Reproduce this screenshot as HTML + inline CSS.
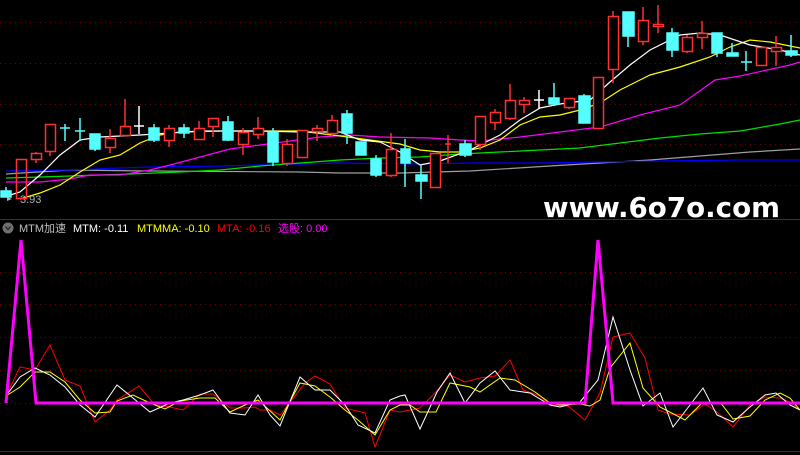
<!DOCTYPE html>
<html><head><meta charset="utf-8"><style>
html,body{margin:0;padding:0;background:#000;width:800px;height:455px;overflow:hidden}
svg{display:block}
text{font-family:"Liberation Sans","Noto Sans CJK SC",sans-serif}
</style></head><body>
<svg width="800" height="455" xmlns="http://www.w3.org/2000/svg">
<g stroke="#7a0000" stroke-dasharray="1,4" stroke-width="1">
<line x1="0" y1="22.5" x2="800" y2="22.5"/><line x1="0" y1="63.5" x2="800" y2="63.5"/><line x1="0" y1="104.5" x2="800" y2="104.5"/><line x1="0" y1="144.5" x2="800" y2="144.5"/><line x1="0" y1="185.5" x2="800" y2="185.5"/>
<line x1="0" y1="272.5" x2="800" y2="272.5"/><line x1="0" y1="304.5" x2="800" y2="304.5"/><line x1="0" y1="337.5" x2="800" y2="337.5"/><line x1="0" y1="370.5" x2="800" y2="370.5"/><line x1="0" y1="403.5" x2="800" y2="403.5"/>
</g>
<line x1="0" y1="219.5" x2="800" y2="219.5" stroke="#b00000"/>
<line x1="0" y1="451.5" x2="800" y2="451.5" stroke="#b00000"/>
<g fill="none" stroke-width="1.2">
<polyline stroke="#9e9e9e" points="6,174 70,170 150,171 300,172 340,173 400,173 470,171 550,166 600,163 650,160 700,156 750,152 800,149"/>
<polyline stroke="#0000ff" points="6,171 70,170 120,168 150,167 220,166 300,164 340,163 420,164 470,163 540,163 600,162 660,161 740,160 800,160"/>
<polyline stroke="#00e000" points="6,178 40,177 70,176 100,175 130,174 180,172 220,170 260,166 300,163 340,160 380,158 420,157 460,154 500,152 540,150 580,148 620,143 660,138 700,134 740,131 780,124 800,120"/>
<polyline stroke="#ff00ff" points="6,182 40,182 70,179 90,175 120,175 150,170 170,165 200,157 230,149 260,145 290,141 320,137 350,135 380,137 430,138 460,140 480,141 520,137 560,132 600,127 640,115 680,105 715,80 740,76 790,65 800,62"/>
</g>
<g fill="none" stroke-width="1.2">
<polyline stroke="#ffff00" points="20,199 40,193 60,185 80,172 100,160 120,155 140,143 160,135 180,132 220,131 260,131 300,131 340,136 370,140 400,144 420,150 440,152 460,152 480,148 500,140 520,125 540,117 560,115 580,110 600,103 620,90 650,75 680,67 710,57 730,47 750,40 770,42 800,48"/>
<polyline stroke="#ffffff" points="4,197 20,192 40,175 60,155 80,140 100,137 140,135 200,131 260,131 300,132 340,132 360,140 380,142 400,152 420,165 440,161 470,150 500,135 520,120 540,108 560,104 590,100 610,82 630,65 650,50 680,35 700,33 720,35 750,45 780,50 800,55"/>
</g>
<text x="20" y="203" fill="#b0b0b0" font-size="11">3.93</text>
<path d="M7,197 L12,199 L7,201Z" fill="#b0b0b0"/>
<text x="543" y="217" fill="#fff" font-size="28" font-weight="bold" style="font-family:'DejaVu Sans',sans-serif" textLength="237" lengthAdjust="spacingAndGlyphs">www.6o7o.com</text>
<circle cx="8" cy="228" r="5.5" fill="#707070"/>
<path d="M5.5,226.5 L8,229.5 L10.5,226.5" stroke="#222" stroke-width="1.3" fill="none"/>
<g font-size="11">
<text x="19" y="232" fill="#c0c0c0">MTM加速</text>
<text x="73" y="232" fill="#fff">MTM: -0.11</text>
<text x="137" y="232" fill="#ffff00">MTMMA: -0.10</text>
<text x="217" y="232" fill="#ff0000">MTA: -0.16</text>
<text x="278" y="232" fill="#ff00ff">选股: 0.00</text>
</g>
<g fill="none" stroke-width="1">
<polyline stroke="#ff0000" points="6,396 20,367 35,370 50,345 65,380 80,386 95,422 110,410 117,400 139,386 155,405 170,407 183,410 200,394 213,394 230,408 245,408 255,407 260,410 270,410 280,415 305,383 315,376 330,384 345,408 365,413 375,447 390,410 400,412 420,408 437,391 450,375 465,382 480,378 495,376 510,360 523,390 540,396 550,405 568,406 585,420 600,393 613,337 630,333 645,358 658,410 670,414 690,415 705,404 717,412 733,427 750,405 765,397 780,398 790,402 800,410"/>
<polyline stroke="#ffff00" points="6,396 20,387 35,372 50,372 65,382 80,400 95,413 110,412 117,401 133,395 150,403 165,409 180,401 200,398 215,398 230,412 245,405 258,400 280,420 300,383 315,386 330,397 345,410 358,420 375,435 390,410 400,405 410,405 420,412 436,412 450,383 470,387 480,392 500,378 515,380 535,392 550,403 560,405 580,404 590,406 600,400 610,368 630,343 643,388 660,407 685,420 703,402 720,402 733,419 750,416 765,400 780,393 790,398 800,410"/>
<polyline stroke="#ffffff" points="6,396 20,377 35,368 50,375 65,387 80,405 95,417 117,385 133,398 150,412 170,403 183,400 200,395 213,390 230,413 245,415 258,395 270,415 280,426 300,377 315,390 330,390 345,405 358,425 375,433 390,400 400,396 405,395 420,429 437,392 450,373 465,403 480,383 495,371 510,390 530,393 550,405 560,407 580,402 598,380 613,317 630,370 643,406 660,393 673,427 690,405 703,388 717,415 733,422 750,407 765,395 776,393 790,405 800,410"/>
<polyline stroke="#ff00ff" stroke-width="3" points="6,403 21,240 36,403 585,403 598,240 613,403 800,403"/>
</g>
<g stroke-width="1.5">
<g stroke="#55ffff" fill="#55ffff">
<line x1="6" y1="187" x2="6" y2="197"/><rect x="1" y="191" width="10" height="6"/>
<line x1="65" y1="124" x2="65" y2="141"/><line x1="60" y1="128" x2="70" y2="128"/>
<line x1="80" y1="118" x2="80" y2="141"/><line x1="75" y1="131" x2="85" y2="131"/>
<line x1="95" y1="134" x2="95" y2="151"/><rect x="90" y="134" width="10" height="15"/>
<line x1="154" y1="124" x2="154" y2="142"/><rect x="149" y="128" width="10" height="12"/>
<line x1="184" y1="124" x2="184" y2="138"/><rect x="179" y="128" width="10" height="5"/>
<line x1="228" y1="116" x2="228" y2="141"/><rect x="223" y="122" width="10" height="18"/>
<line x1="273" y1="128" x2="273" y2="166"/><rect x="268" y="132" width="10" height="30"/>
<line x1="347" y1="110" x2="347" y2="144"/><rect x="342" y="114" width="10" height="19"/>
<rect x="356" y="142" width="10" height="13"/>
<line x1="376" y1="155" x2="376" y2="177"/><rect x="371" y="159" width="10" height="16"/>
<line x1="405" y1="139" x2="405" y2="187"/><rect x="401" y="149" width="9" height="14"/>
<line x1="421" y1="165" x2="421" y2="199"/><rect x="416" y="175" width="11" height="6"/>
<line x1="465" y1="140" x2="465" y2="157"/><rect x="460" y="144" width="11" height="11"/>
<line x1="554" y1="83" x2="554" y2="105"/><rect x="549" y="98" width="10" height="6"/>
<line x1="584" y1="94" x2="584" y2="123"/><rect x="579" y="96" width="11" height="27"/>
<line x1="628" y1="36" x2="628" y2="47"/><rect x="623" y="12" width="11" height="24"/>
<line x1="672" y1="28" x2="672" y2="57"/><rect x="667" y="33" width="11" height="17"/>
<line x1="717" y1="33" x2="717" y2="57"/><rect x="712" y="33" width="10" height="20"/>
<line x1="732" y1="43" x2="732" y2="56"/><rect x="727" y="53" width="11" height="3"/>
<line x1="746" y1="51" x2="746" y2="71"/><line x1="741" y1="62" x2="752" y2="62"/>
<line x1="791" y1="35" x2="791" y2="57"/><rect x="786" y="51" width="11" height="4"/>
</g>
<g stroke="#ff3030" fill="none">
<rect x="16.5" y="159.5" width="10" height="39"/>
<line x1="36" y1="152" x2="36" y2="163"/><rect x="31.5" y="153.5" width="10" height="6" fill="#000"/>
<line x1="50" y1="151" x2="50" y2="156"/><rect x="45.5" y="124.5" width="10" height="27"/>
<line x1="110" y1="129" x2="110" y2="153"/><rect x="105.5" y="138.5" width="10" height="9" fill="#000"/>
<line x1="125" y1="99" x2="125" y2="135"/><rect x="120.5" y="126.5" width="10" height="9" fill="#000"/>
<line x1="169" y1="125" x2="169" y2="147"/><rect x="164.5" y="128.5" width="10" height="12" fill="#000"/>
<line x1="199" y1="121" x2="199" y2="140"/><rect x="194.5" y="128.5" width="10" height="11" fill="#000"/>
<line x1="213" y1="118" x2="213" y2="137"/><rect x="208.5" y="118.5" width="10" height="8" fill="#000"/>
<line x1="243" y1="128" x2="243" y2="155"/><rect x="238.5" y="132.5" width="10" height="12" fill="#000"/>
<line x1="258" y1="117" x2="258" y2="139"/><rect x="253.5" y="128.5" width="10" height="6" fill="#000"/>
<rect x="282.5" y="144.5" width="10" height="19" fill="#000"/><line x1="287" y1="139" x2="287" y2="144"/><line x1="287" y1="164" x2="287" y2="166"/>
<rect x="297.5" y="130.5" width="10" height="27" fill="#000"/>
<line x1="317" y1="125" x2="317" y2="141"/><rect x="312.5" y="128.5" width="10" height="3" fill="#000"/>
<line x1="332" y1="115" x2="332" y2="136"/><rect x="327.5" y="120.5" width="10" height="13" fill="#000"/>
<line x1="391" y1="133" x2="391" y2="177"/><rect x="386.5" y="149.5" width="10" height="26" fill="#000"/>
<rect x="430.5" y="153.5" width="10" height="34" fill="#000"/>
<line x1="448" y1="135" x2="448" y2="163"/><line x1="445" y1="144" x2="451" y2="144"/>
<line x1="480" y1="144" x2="480" y2="150"/><rect x="475.5" y="116.5" width="10" height="28" fill="#000"/>
<line x1="495" y1="109" x2="495" y2="130"/><rect x="490.5" y="112.5" width="10" height="10" fill="#000"/>
<line x1="510" y1="84" x2="510" y2="120"/><rect x="505.5" y="100.5" width="10" height="18" fill="#000"/>
<line x1="524" y1="97" x2="524" y2="113"/><rect x="519.5" y="100.5" width="10" height="4" fill="#000"/>
<line x1="569" y1="98" x2="569" y2="109"/><rect x="564.5" y="98.5" width="10" height="9" fill="#000"/>
<rect x="593.5" y="77.5" width="10" height="51" fill="#000"/>
<line x1="613" y1="11" x2="613" y2="83"/><rect x="608.5" y="16.5" width="10" height="53" fill="#000"/>
<line x1="643" y1="7" x2="643" y2="45"/><rect x="638.5" y="20.5" width="10" height="21" fill="#000"/>
<line x1="658" y1="5" x2="658" y2="33"/><rect x="653.5" y="24.5" width="10" height="2" fill="#000"/>
<line x1="687" y1="35" x2="687" y2="53"/><rect x="682.5" y="37.5" width="10" height="14" fill="#000"/>
<line x1="702" y1="21" x2="702" y2="49"/><rect x="697.5" y="33.5" width="10" height="4" fill="#000"/>
<rect x="756.5" y="47.5" width="10" height="18" fill="#000"/>
<line x1="776" y1="36" x2="776" y2="66"/><rect x="771.5" y="47.5" width="10" height="4" fill="#000"/>
</g>
<g stroke="#fff">
<line x1="139" y1="106" x2="139" y2="134"/><line x1="134" y1="126" x2="144" y2="126"/>
<line x1="539" y1="90" x2="539" y2="109"/><line x1="534" y1="100" x2="544" y2="100"/>
</g>
</g>
</svg>
</body></html>
